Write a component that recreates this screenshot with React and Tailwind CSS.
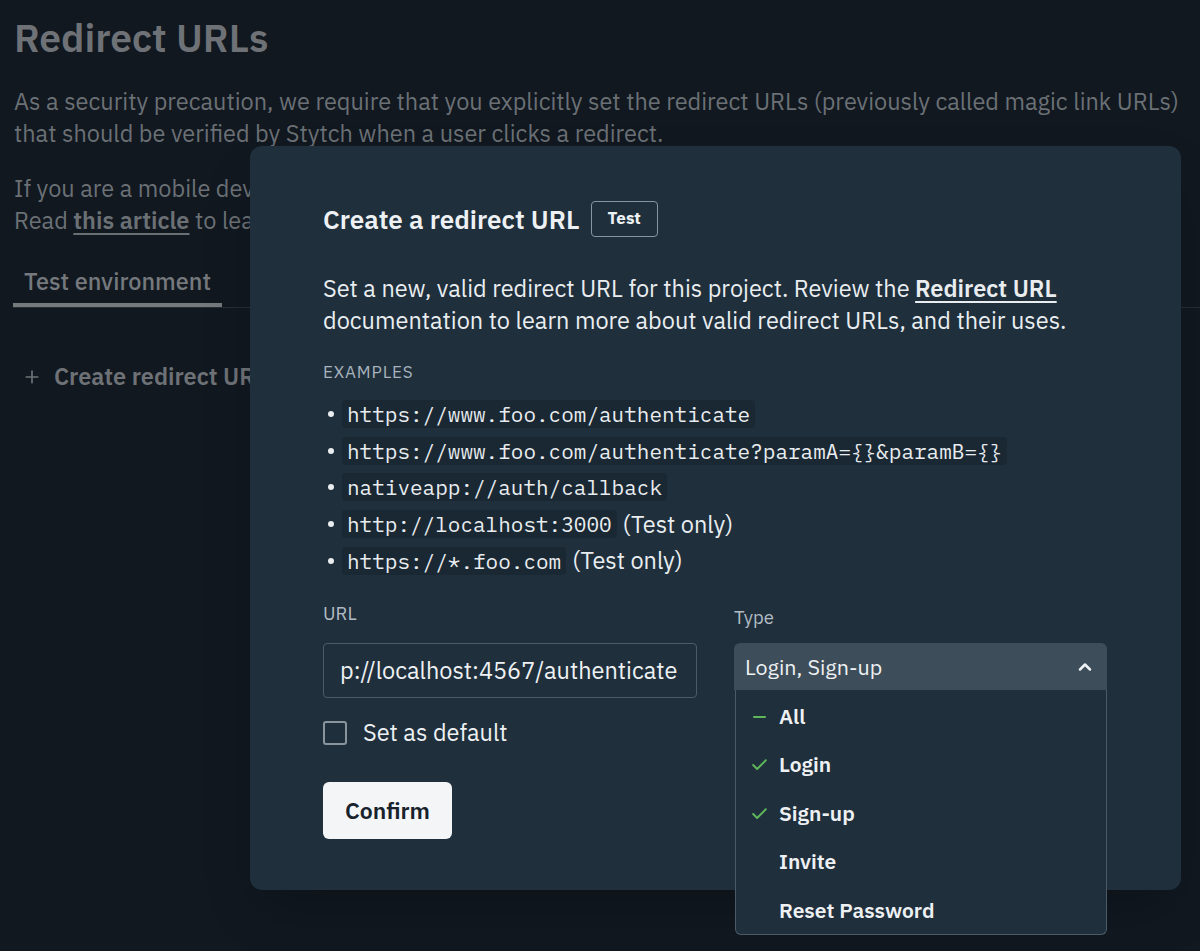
import { Plus, ChevronUp, Check, Minus } from "lucide-react";

const examples = [
  { url: "https://www.foo.com/authenticate" },
  { url: "https://www.foo.com/authenticate?paramA={}&paramB={}" },
  { url: "nativeapp://auth/callback" },
  { url: "http://localhost:3000", note: "(Test only)" },
  { url: "https://*.foo.com", note: "(Test only)" },
];

const types = [
  { label: "All", mark: "partial" },
  { label: "Login", mark: "check" },
  { label: "Sign-up", mark: "check" },
  { label: "Invite" },
  { label: "Reset Password" },
];

export default function App() {
  return (
    <div
      className="relative min-h-[951px] w-full overflow-hidden bg-[#111820] text-[#6b7075]"
      style={{ fontFamily: '"IBM Plex Sans", "Noto Sans", sans-serif' }}
    >
      {/* page behind the dialog */}
      <div className="px-[14px] pt-[14px]">
        <h1 className="text-[39px] font-semibold leading-[48px] text-[#6e7276]">Redirect URLs</h1>
        <p className="mt-[23px] whitespace-nowrap text-[23.5px] leading-[32px]">
          As a security precaution, we require that you explicitly set the redirect URLs (previously called magic link URLs)
          <br />
          that should be verified by Stytch when a user clicks a redirect.
        </p>
        <p className="mt-[23px] whitespace-nowrap text-[23.5px] leading-[32px]">
          If you are a mobile developer, make sure to add your app's deep link scheme as a redirect URL.
          <br />
          Read <span className="font-semibold underline underline-offset-4">this article</span> to learn more.
        </p>
      </div>

      <div className="ml-[13px] mt-[29px] border-b border-[#262e36]">
        <div className="inline-block border-b-[4px] border-[#76797c] px-[11px] pb-[6px] text-[23.5px] font-medium leading-[32px] text-[#75797d]">
          Test environment
        </div>
      </div>

      <div className="mt-[51px] flex items-center gap-[12px] px-[22px] text-[23.5px] font-semibold text-[#6e7276]">
        <Plus size={20} strokeWidth={2} />
        <span>Create redirect URL</span>
      </div>

      {/* dialog */}
      <div className="absolute left-[250px] top-[146px] h-[744px] w-[931px] rounded-[12px] bg-[#1f2f3c] pl-[73px] pr-[70px] pt-[55px] text-[#eef1f3] shadow-2xl">
        <div className="flex items-center gap-[11px]">
          <h2 className="text-[26px] font-semibold leading-[36px]">Create a redirect URL</h2>
          <span className="flex h-[36px] items-center rounded-[4px] border border-[#8796a2] px-[16px] text-[17px] font-bold">
            Test
          </span>
        </div>

        <p className="mt-[35px] whitespace-nowrap text-[23.5px] leading-[32px] text-[#e9edf0]">
          Set a new, valid redirect URL for this project. Review the{" "}
          <span className="font-semibold underline underline-offset-4">Redirect URL</span>
          <br />
          documentation to learn more about valid redirect URLs, and their uses.
        </p>

        <div className="mt-[24px] text-[17px] uppercase tracking-[0.05em] text-[#a8b3bc]">Examples</div>

        <ul className="mt-[10px] flex flex-col text-[23.5px]">
          {examples.map((e) => (
            <li key={e.url} className="flex h-[36.8px] items-center gap-[6px]">
              <span className="ml-[5px] mr-[2px] h-[6px] w-[6px] rounded-full bg-[#e9edf0]" />
              <code
                className="rounded-[4px] bg-[#1a2833] px-[5px] text-[21px] leading-[28px] text-[#e9edf0]"
                style={{ fontFamily: '"IBM Plex Mono", "DejaVu Sans Mono", monospace' }}
              >
                {e.url}
              </code>
              {e.note && <span className="text-[#e9edf0]">{e.note}</span>}
            </li>
          ))}
        </ul>

        <div className="mt-[22px] flex gap-[37px]">
          <div className="w-[374px]">
            <div className="text-[18.5px] leading-[24px] text-[#b3bcc3]">URL</div>
            <div className="mt-[18px] flex h-[55px] items-center overflow-hidden whitespace-nowrap rounded-[4px] border border-[#4b5b67] px-[16px] text-[23.5px]">
              p://localhost:4567/authenticate
            </div>
            <label className="mt-[17px] flex items-center gap-[16px] text-[23.5px]">
              <span className="h-[24px] w-[24px] rounded-[3px] border-2 border-[#8a949c]" />
              Set as default
            </label>
            <button className="mt-[31px] h-[57px] rounded-[6px] bg-[#f3f5f7] px-[22px] text-[23px] font-semibold text-[#17222c]">
              Confirm
            </button>
          </div>

          <div className="relative mt-[4px] w-[373px]">
            <div className="text-[18.5px] leading-[24px] text-[#b3bcc3]">Type</div>
            <div className="mt-[14px] flex h-[47px] items-center justify-between rounded-t-[6px] bg-[#3d4d5a] pl-[11px] pr-[12px] text-[21.5px]">
              <span>Login, Sign-up</span>
              <ChevronUp size={20} strokeWidth={3} />
            </div>
            <div className="absolute left-[1px] right-0 top-[85px] h-[245px] rounded-b-[6px] border border-t-0 border-[#4a5a67] bg-[#1f2f3c] pt-[2px]">
              {types.map((t) => (
                <div key={t.label} className="flex h-[48.5px] items-center gap-[10px] pl-[14px] text-[21px] font-semibold">
                  <span className="flex w-[19px] justify-center text-[#5fb55a]">
                    {t.mark === "check" && <Check size={20} strokeWidth={2.5} />}
                    {t.mark === "partial" && <Minus size={20} strokeWidth={2.5} />}
                  </span>
                  <span>{t.label}</span>
                </div>
              ))}
            </div>
          </div>
        </div>
      </div>
    </div>
  );
}
